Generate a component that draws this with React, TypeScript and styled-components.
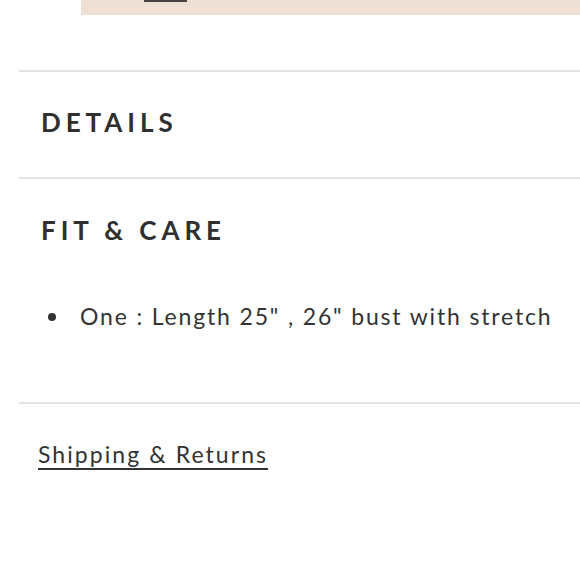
import React from "react";
import styled, { createGlobalStyle } from "styled-components";

const Global = createGlobalStyle`
  html, body { margin: 0; padding: 0; background: #ffffff; }
  body { font-family: Lato, "Open Sans", sans-serif; color: #333333; }
`;

const Page = styled.div`
  width: 580px;
  height: 580px;
  overflow: hidden;
  padding-left: 19px;
  box-sizing: border-box;
`;

const Banner = styled.div`
  margin-left: 62px;
  margin-bottom: 55px;
  height: 15px;
  background: #eee0d5;
  position: relative;
`;

const BannerMark = styled.span`
  position: absolute;
  left: 63px;
  top: 0;
  width: 43px;
  height: 2px;
  background: #4a4444;
`;

const Section = styled.section<{ $pad: string }>`
  border-top: 2px solid #e3e3e3;
  padding: ${(p) => p.$pad};
`;

const Title = styled.h2`
  margin: 0;
  padding-left: 22px;
  font-family: Lato, sans-serif;
  font-weight: 700;
  font-size: 26px;
  line-height: 30px;
  letter-spacing: 0.19em;
  color: #2f2f2f;
`;

const List = styled.ul`
  margin: 56px 0 0;
  padding: 0 0 0 28px;
  list-style: none;
`;

const Item = styled.li`
  position: relative;
  padding-left: 33px;
  font-size: 23px;
  line-height: 30px;
  letter-spacing: 0.08em;
  color: #333333;
  &::before {
    content: "";
    position: absolute;
    left: 1px;
    top: 12px;
    width: 8px;
    height: 8px;
    border-radius: 50%;
    background: #333333;
  }
`;

const LinkText = styled.a`
  display: inline-block;
  margin-left: 19px;
  font-size: 23px;
  line-height: 30px;
  letter-spacing: 0.09em;
  color: #333333;
  text-decoration: underline;
  text-decoration-thickness: 2px;
  text-underline-offset: 5px;
`;

export default function App() {
  return (
    <>
      <Global />
      <Page>
        <Banner>
          <BannerMark />
        </Banner>
        <Section $pad="35px 0 40px">
          <Title>DETAILS</Title>
        </Section>
        <Section $pad="36px 0 71px">
          <Title>FIT &amp; CARE</Title>
          <List>
            <Item>One : Length 25" , 26" bust with stretch</Item>
          </List>
        </Section>
        <Section $pad="35px 0 0">
          <LinkText href="#">Shipping &amp; Returns</LinkText>
        </Section>
      </Page>
    </>
  );
}
